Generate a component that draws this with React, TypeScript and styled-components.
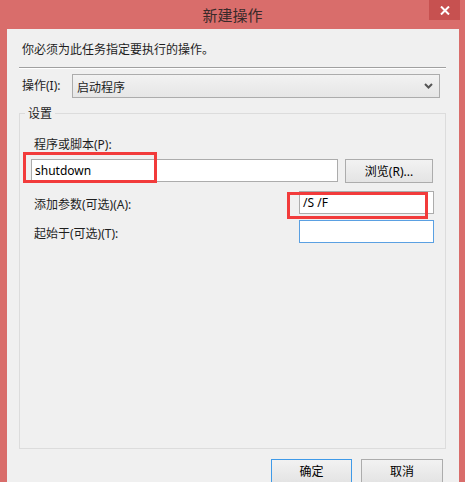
import React from "react";
import styled, { createGlobalStyle } from "styled-components";

const Global = createGlobalStyle`
  html, body {
    margin: 0;
    padding: 0;
    background: #d96d6b;
    height: 100%;
    overflow: hidden;
  }
  body {
    font-family: "Noto Sans", "Noto Sans CJK SC", sans-serif;
    font-size: 12px;
    color: #1e1e1e;
  }
`;

const Window = styled.div`
  width: 465px;
  height: 482px;
  display: flex;
  flex-direction: column;
  background: #d96d6b;
`;

const TitleBar = styled.div`
  height: 29px;
  display: grid;
  grid-template-columns: 1fr auto 1fr;
  align-items: start;
  flex-shrink: 0;
`;

const Title = styled.div`
  grid-column: 2;
  font-size: 15px;
  line-height: 29px;
  color: #3a2a2a;
  font-family: "Noto Sans CJK SC", sans-serif;
`;

const CloseButton = styled.div`
  grid-column: 3;
  justify-self: end;
  margin-right: 5px;
  width: 31px;
  height: 20px;
  background: #c75150;
  display: flex;
  align-items: center;
  justify-content: center;
`;

const Client = styled.div`
  flex: 1;
  margin: 0 6px 0 7px;
  background: #f0f0f0;
  padding: 0 13px 0 12px;
`;

const Intro = styled.div`
  margin-top: 12px;
  padding-left: 3px;
  line-height: 16px;
  font-family: "Noto Sans CJK SC", sans-serif;
`;

const Separator = styled.div`
  margin-top: 10px;
  height: 1px;
  background: #a0a0a0;
  border-bottom: 1px solid #ffffff;
`;

const OpRow = styled.div`
  margin-top: 5px;
  display: flex;
  align-items: center;
  padding-right: 6px;
`;

const OpLabel = styled.div`
  width: 50px;
  padding-left: 3px;
  line-height: 16px;
  flex-shrink: 0;
`;

const Select = styled.div`
  flex: 1;
  height: 24px;
  box-sizing: border-box;
  border: 1px solid #acacac;
  background: linear-gradient(#f2f2f2, #e6e6e6);
  display: flex;
  align-items: center;
  justify-content: space-between;
  padding: 0 6px 0 4px;
  font-family: "Noto Sans CJK SC", sans-serif;
`;

const Group = styled.fieldset`
  margin: 7px 0 0 0;
  height: 344px;
  box-sizing: border-box;
  border: 1px solid #dcdcdc;
  padding: 0 12px 0 11px;
  min-width: 0;
`;

const Legend = styled.legend`
  margin-left: -6px;
  padding: 0 3px;
  line-height: 16px;
  font-family: "Noto Sans CJK SC", sans-serif;
`;

const FieldLabel = styled.div<{ $top?: number }>`
  padding-left: 3px;
  line-height: 16px;
  margin-top: ${(p) => p.$top ?? 0}px;
`;

const InputRow = styled.div`
  margin-top: 6px;
  display: flex;
  align-items: flex-start;
  justify-content: space-between;
`;

const InputWrap = styled.div`
  position: relative;
`;

const TextBox = styled.div<{ $width: number; $focused?: boolean }>`
  width: ${(p) => p.$width}px;
  height: 23px;
  box-sizing: border-box;
  background: #ffffff;
  border: 1px solid ${(p) => (p.$focused ? "#5aa0e2" : "#acacac")};
  padding: 0 3px;
  line-height: 21px;
  color: #000;
`;

const Highlight = styled.div<{ $l: number; $t: number; $w: number; $h: number }>`
  position: absolute;
  left: ${(p) => p.$l}px;
  top: ${(p) => p.$t}px;
  width: ${(p) => p.$w}px;
  height: ${(p) => p.$h}px;
  box-sizing: border-box;
  border: 3px solid #f23b3b;
  pointer-events: none;
`;

const Button = styled.div<{ $primary?: boolean; $width: number }>`
  width: ${(p) => p.$width}px;
  height: 24px;
  box-sizing: border-box;
  border: 1px solid ${(p) => (p.$primary ? "#3f9ae8" : "#acacac")};
  background: linear-gradient(#f2f2f2, #e4e4e4);
  display: flex;
  align-items: center;
  justify-content: center;
  color: #000;
`;

const ParamRow = styled.div<{ $top: number }>`
  margin-top: ${(p) => p.$top}px;
  display: flex;
  align-items: center;
  justify-content: space-between;
  margin-right: -1px;
`;

const ParamLabel = styled.div`
  padding-left: 3px;
  padding-top: 5px;
  line-height: 16px;
`;

const Footer = styled.div`
  margin-top: 10px;
  display: flex;
  justify-content: flex-end;
  gap: 9px;
  padding-right: 3px;
`;

export default function App() {
  return (
    <Window>
      <Global />
      <TitleBar>
        <Title>新建操作</Title>
        <CloseButton>
          <svg width="10" height="9" viewBox="0 0 10 9">
            <path d="M1 0.5 L9 8.5 M9 0.5 L1 8.5" stroke="#fff" strokeWidth="2" />
          </svg>
        </CloseButton>
      </TitleBar>
      <Client>
        <Intro>你必须为此任务指定要执行的操作。</Intro>
        <Separator />
        <OpRow>
          <OpLabel>操作(I):</OpLabel>
          <Select>
            <span>启动程序</span>
            <svg width="9" height="6" viewBox="0 0 9 6">
              <path d="M1 1 L4.5 4.5 L8 1" stroke="#555" strokeWidth="2" fill="none" />
            </svg>
          </Select>
        </OpRow>
        <Group>
          <Legend>设置</Legend>
          <FieldLabel $top={16}>程序或脚本(P):</FieldLabel>
          <InputRow>
            <InputWrap>
              <TextBox $width={307}>shutdown</TextBox>
              <Highlight $l={-8} $t={-7} $w={134} $h={31} />
            </InputWrap>
            <Button $width={88}>浏览(R)...</Button>
          </InputRow>
          <ParamRow $top={8}>
            <ParamLabel>添加参数(可选)(A):</ParamLabel>
            <InputWrap>
              <TextBox $width={135}>/S /F</TextBox>
              <Highlight $l={-12} $t={1} $w={141} $h={27} />
            </InputWrap>
          </ParamRow>
          <ParamRow $top={6}>
            <ParamLabel>起始于(可选)(T):</ParamLabel>
            <TextBox $width={135} $focused />
          </ParamRow>
        </Group>
        <Footer>
          <Button $primary $width={81}>确定</Button>
          <Button $width={82}>取消</Button>
        </Footer>
      </Client>
    </Window>
  );
}
